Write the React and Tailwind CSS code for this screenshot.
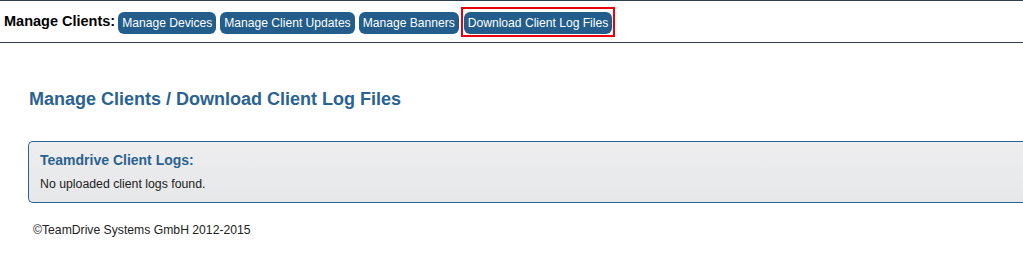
import React from 'react';

const tabs = ['Manage Devices', 'Manage Client Updates', 'Manage Banners', 'Download Client Log Files'];

export default function App() {
  return (
    <div className="min-h-screen bg-white text-black" style={{ fontFamily: '"Liberation Sans", Arial, sans-serif' }}>
      <div className="h-[43px] border-t border-b border-[#2c3e50] flex items-center pl-[4px]">
        <span className="text-[14.5px] font-bold mr-[3px]">Manage Clients:</span>
        <div className="flex items-center gap-[4px]">
          {tabs.map((t, i) => (
            <div key={t} className={i === 3 ? 'border-2 border-[#e8000d] p-[1px] -ml-[2px]' : ''}>
              <button className="h-[22px] px-[4px] rounded-[6px] bg-[#225d8b] text-white text-[12.1px] leading-[22px]">
                {t}
              </button>
            </div>
          ))}
        </div>
      </div>

      <div className="pl-[28px] pt-[46px]">
        <h1 className="text-[18px] font-bold text-[#2a6291] leading-[21px] pl-[1px]">Manage Clients / Download Client Log Files</h1>

        <div className="mt-[31px] h-[62px] border border-r-0 border-[#2a6291] rounded-l-[5px] bg-gradient-to-b from-[#eeeeef] to-[#e6e7e9] px-[11px] pt-[10px]">
          <h2 className="text-[14px] font-bold text-[#2a6291] leading-[16px]">Teamdrive Client Logs:</h2>
          <p className="text-[12.3px] text-[#222] mt-[9px] leading-[14px]">No uploaded client logs found.</p>
        </div>

        <p className="text-[12.2px] text-[#222] mt-[20px] pl-[5px] leading-[14px]">©TeamDrive Systems GmbH 2012-2015</p>
      </div>
    </div>
  );
}
